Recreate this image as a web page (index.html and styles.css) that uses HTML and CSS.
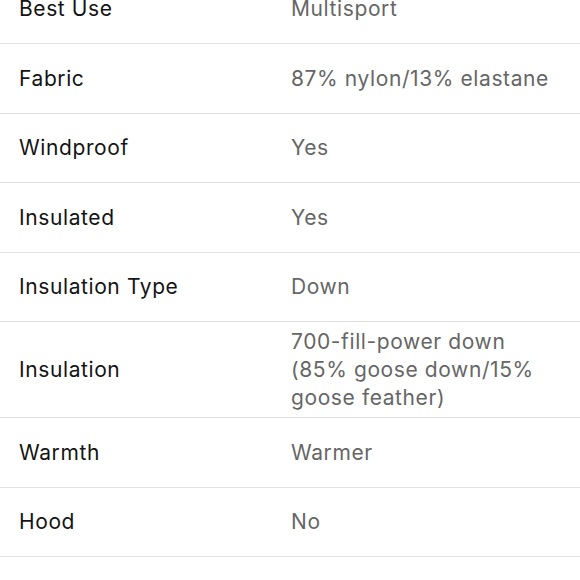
FILE: index.html
```html
<!DOCTYPE html>
<html>
<head>
<meta charset="utf-8">
<link rel="stylesheet" href="styles.css">
</head>
<body>
<div class="specs">
  <div class="row"><div class="label">Best Use</div><div class="value">Multisport</div></div>
  <div class="row"><div class="label">Fabric</div><div class="value">87% nylon/13% elastane</div></div>
  <div class="row"><div class="label">Windproof</div><div class="value">Yes</div></div>
  <div class="row"><div class="label">Insulated</div><div class="value">Yes</div></div>
  <div class="row"><div class="label">Insulation Type</div><div class="value">Down</div></div>
  <div class="row"><div class="label">Insulation</div><div class="value">700-fill-power down (85% goose down/15% goose feather)</div></div>
  <div class="row"><div class="label">Warmth</div><div class="value">Warmer</div></div>
  <div class="row"><div class="label">Hood</div><div class="value">No</div></div>
</div>
</body>
</html>
```
FILE: styles.css
```css
html, body {
  margin: 0;
  padding: 0;
  background: #ffffff;
}
body {
  font-family: Inter, "Liberation Sans", sans-serif;
  font-size: 21px;
  line-height: 28px;
  letter-spacing: 0.6px;
  overflow: hidden;
}
.specs {
  margin-top: -25.5px;
}
.row {
  display: grid;
  grid-template-columns: 272px 1fr;
  align-items: center;
  min-height: 69.5px;
  padding: 6px 30px 5px 19px;
  box-sizing: border-box;
  border-bottom: 1px solid #e2e2e2;
}
.label {
  color: #141414;
}
.value {
  color: #666666;
}
```
